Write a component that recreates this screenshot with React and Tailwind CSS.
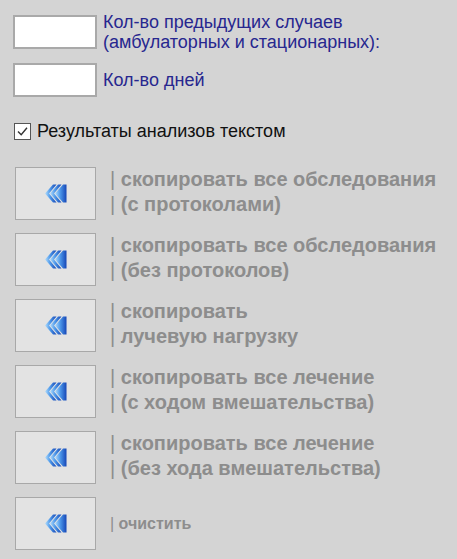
import React from "react";

const Icon = () => (
  <svg width="22" height="19" viewBox="0 0 22 19">
    <defs>
      <linearGradient id="g" x1="0" y1="0" x2="1" y2="0">
        <stop offset="0" stopColor="#b4defc" />
        <stop offset="0.45" stopColor="#4d98ea" />
        <stop offset="1" stopColor="#1546b6" />
      </linearGradient>
    </defs>
    <polygon points="0,9.5 8,0.5 11.5,0.5 4,9.5 11.5,18.5 8,18.5" fill="url(#g)" />
    <polygon points="5,9.5 13,0.5 16.5,0.5 9,9.5 16.5,18.5 13,18.5" fill="url(#g)" />
    <polygon points="10,9.5 18,0.5 21.5,0.5 21.5,18.5 18,18.5" fill="url(#g)" />
  </svg>
);

const buttons = [
  ["скопировать все обследования", "(с протоколами)"],
  ["скопировать все обследования", "(без протоколов)"],
  ["скопировать", "лучевую нагрузку"],
  ["скопировать все лечение", "(с ходом вмешательства)"],
  ["скопировать все лечение", "(без хода вмешательства)"],
];

const Btn = () => (
  <div className="w-[81px] h-[53px] shrink-0 bg-[#e3e3e3] border border-[#a8a8a8] flex items-center justify-center">
    <Icon />
  </div>
);

const Pipe = () => <span className="font-normal">|</span>;

export default function App() {
  return (
    <div
      className="w-[457px] h-[559px] bg-[#d4d4d4] pt-[15px] pl-[13px] overflow-hidden"
      style={{ fontFamily: '"Liberation Sans", Arial, sans-serif' }}
    >
      <div className="flex items-start gap-[6px] h-[34px]">
        <div className="w-[84px] h-[34px] bg-white border-2 border-[#a9a9a9] shrink-0" />
        <div className="text-[18px] leading-[20px] text-[#27278f] -mt-[3px] whitespace-nowrap">
          Кол-во предыдущих случаев
          <br />
          (амбулаторных и стационарных):
        </div>
      </div>
      <div className="flex items-center gap-[6px] mt-[14px]">
        <div className="w-[84px] h-[34px] bg-white border-2 border-[#a9a9a9] shrink-0" />
        <div className="text-[18px] leading-[24px] text-[#27278f]">Кол-во дней</div>
      </div>
      <div className="flex items-center gap-[6px] mt-[22px] h-[24px] pl-[1px]">
        <div className="w-[17px] h-[17px] bg-white border border-[#555] flex items-center justify-center shrink-0">
          <svg width="13" height="13" viewBox="0 0 13 13">
            <polyline points="2,6.5 5.2,9.8 11,2.8" fill="none" stroke="#333" strokeWidth="1.4" />
          </svg>
        </div>
        <div className="text-[18px] leading-[24px] text-[#111]">Результаты анализов текстом</div>
      </div>
      <div className="flex flex-col gap-[13px] mt-[24px] pl-[2px]">
        {buttons.map((b, i) => (
          <div key={i} className="flex items-start gap-[14px]">
            <Btn />
            <div className="text-[20px] leading-[25px] font-bold text-[#8d8d8d] whitespace-nowrap">
              <Pipe /> {b[0]}
              <br />
              <Pipe /> {b[1]}
            </div>
          </div>
        ))}
        <div className="flex items-center gap-[14px]">
          <Btn />
          <div className="text-[16px] font-bold text-[#8d8d8d]">
            <Pipe /> очистить
          </div>
        </div>
      </div>
    </div>
  );
}
